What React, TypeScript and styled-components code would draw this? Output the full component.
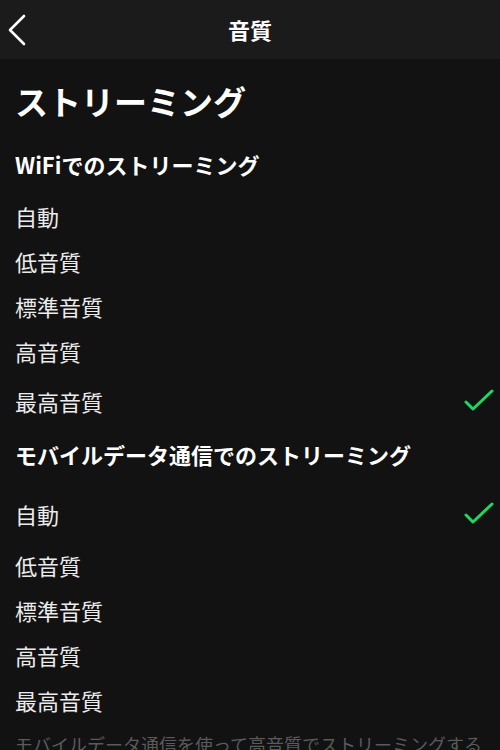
import React from "react";
import styled, { createGlobalStyle } from "styled-components";

const GlobalStyle = createGlobalStyle`
  html, body {
    margin: 0;
    padding: 0;
    background: #121212;
  }
  body {
    font-family: "Noto Sans CJK JP", "Noto Sans", sans-serif;
    -webkit-font-smoothing: antialiased;
  }
`;

const Page = styled.div`
  width: 500px;
  height: 750px;
  overflow: hidden;
  background: #121212;
  color: #ffffff;
  font-family: "Noto Sans CJK JP", "Noto Sans", sans-serif;
`;

const Header = styled.header`
  height: 59px;
  background: #1b1b1b;
  display: grid;
  grid-template-columns: 60px 1fr 60px;
  align-items: center;
`;

const BackButton = styled.button`
  background: none;
  border: none;
  padding: 0 0 0 8px;
  margin: 0;
  height: 59px;
  display: flex;
  align-items: center;
  cursor: pointer;
`;

const HeaderTitle = styled.h1`
  margin: 0;
  text-align: center;
  font-size: 22px;
  font-weight: 700;
  line-height: 59px;
  color: #ffffff;
`;

const Content = styled.main`
  padding: 0 15px;
`;

const PageTitle = styled.h2`
  margin: 22px 0 0;
  font-size: 33px;
  font-weight: 700;
  line-height: 40px;
  color: #ffffff;
`;

const SectionHeading = styled.h3<{ $top: number }>`
  margin: ${(p) => p.$top}px 0 0;
  font-size: 22px;
  font-weight: 700;
  line-height: 30px;
  color: #ffffff;
`;

const OptionList = styled.ul<{ $top: number }>`
  list-style: none;
  margin: ${(p) => p.$top}px 0 0;
  padding: 0;
`;

const OptionRow = styled.li<{ $selected: boolean }>`
  height: ${(p) => (p.$selected ? 56 : 45)}px;
  display: flex;
  align-items: center;
  justify-content: space-between;
  font-size: 22px;
  line-height: 30px;
  color: #ececec;
`;

const CheckIcon = styled.svg`
  width: 30px;
  height: 24px;
  margin-right: -9px;
  flex: none;
`;

const Footnote = styled.p`
  margin: 9px 0 0;
  font-size: 18px;
  line-height: 26px;
  color: #5a5a5a;
  white-space: nowrap;
`;

const Check = () => (
  <CheckIcon viewBox="0 0 30 24" aria-hidden="true">
    <polyline
      points="2,13 9,20 28,2"
      fill="none"
      stroke="#1ed760"
      strokeWidth="3"
      strokeLinecap="round"
      strokeLinejoin="round"
    />
  </CheckIcon>
);

const Chevron = () => (
  <svg width="22" height="34" viewBox="0 0 22 34" aria-hidden="true">
    <polyline
      points="16,3 2,17 16,31"
      fill="none"
      stroke="#ffffff"
      strokeWidth="2.6"
      strokeLinecap="round"
      strokeLinejoin="round"
    />
  </svg>
);

const options = ["自動", "低音質", "標準音質", "高音質", "最高音質"];

const Options = ({ selected, top }: { selected: string; top: number }) => (
  <OptionList $top={top}>
    {options.map((o) => (
      <OptionRow key={o} $selected={o === selected}>
        <span>{o}</span>
        {o === selected && <Check />}
      </OptionRow>
    ))}
  </OptionList>
);

export default function App() {
  return (
    <Page>
      <GlobalStyle />
      <Header>
        <BackButton aria-label="戻る">
          <Chevron />
        </BackButton>
        <HeaderTitle>音質</HeaderTitle>
        <div />
      </Header>
      <Content>
        <PageTitle>ストリーミング</PageTitle>
        <SectionHeading $top={28}>WiFiでのストリーミング</SectionHeading>
        <Options selected="最高音質" top={14} />
        <SectionHeading $top={10}>モバイルデータ通信でのストリーミング</SectionHeading>
        <Options selected="自動" top={17} />
        <Footnote>モバイルデータ通信を使って高音質でストリーミングする</Footnote>
      </Content>
    </Page>
  );
}
